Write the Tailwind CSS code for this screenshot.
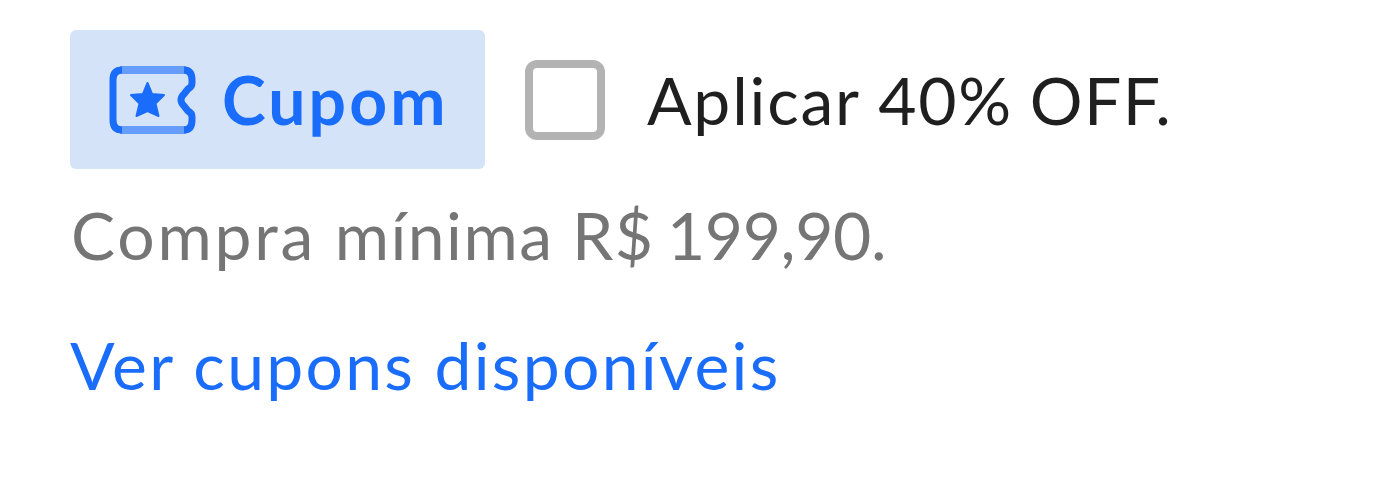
<!DOCTYPE html>
<html lang="pt-BR">
<head>
  <meta charset="UTF-8">
  <meta name="viewport" content="width=device-width, initial-scale=1.0">
  <title>Cupom</title>
  <script src="https://cdn.jsdelivr.net/npm/@tailwindcss/browser@4"></script>
</head>
<body class="bg-white font-[Lato,sans-serif] text-[66px] leading-[80px] whitespace-nowrap overflow-hidden">

  <div class="pl-[70px] pt-[30px]">
    <div class="flex items-center">
      <!-- Selo do cupom -->
      <div class="flex items-center w-[415px] h-[139px] pl-[39px] rounded-md bg-[#d5e3f8] text-[#1a6dfb]">
        <svg class="w-[88px] h-[70px] shrink-0" viewBox="0 0 88 70" fill="none">
          <path d="M11 5H77M11 65H77" stroke="#669dfa" stroke-width="8" />
          <path d="M13 5Q4 5 4 15V55Q4 65 13 65M75 5Q83 5 83 15V18Q83 22 79 24L75 29Q72 32 72 35Q72 38 75 41L79 46Q83 48 83 52V55Q83 65 75 65" stroke="#1a6dfb" stroke-width="7" stroke-linejoin="round" />
          <path d="M38.500 18L43 29L55 30L46.500 38.500L49.500 51L38.500 46L27.500 51L30.500 38.500L22 30L34 29Z" fill="#1a6dfb" stroke="#1a6dfb" stroke-width="2" stroke-linejoin="round" />
        </svg>
        <span class="ml-[25px] font-bold tracking-[3.1px]">Cupom</span>
      </div>

      <label class="flex items-center ml-[40px] text-[#1f1f1f]">
        <input type="checkbox" class="appearance-none w-[80px] h-[80px] border-8 border-[#b3b3b3] rounded-[12px] bg-white">
        <span class="ml-[42px] tracking-[1.8px]">Aplicar 40% <span class="-ml-[2px] tracking-[1.4px]">OFF.</span></span>
      </label>
    </div>

    <p class="mt-[26px] pl-px text-[#757575] tracking-[1.5px]"><span class="tracking-[2.8px]">Compra</span> mínima <span>R$</span> <span class="-ml-[6px] tracking-[-0.4px]">199,90.</span></p>
    <a href="#" class="block mt-[50px] text-[#1a6dfb] tracking-[2.3px]">Ver cupons disponíveis</a>
  </div>

</body>
</html>
